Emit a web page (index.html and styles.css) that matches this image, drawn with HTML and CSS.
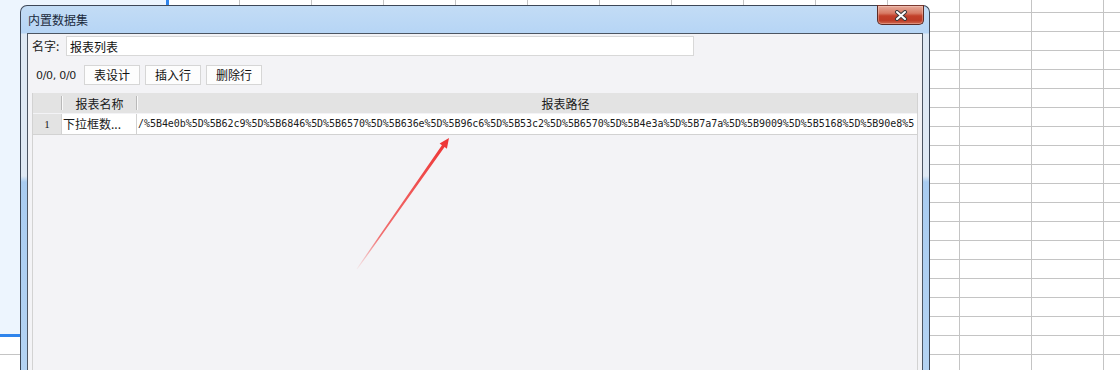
FILE: index.html
```html
<!DOCTYPE html>
<html lang="zh-CN">
<head>
    <meta charset="UTF-8">
    <title>内置数据集</title>
    <link rel="stylesheet" href="styles.css">
</head>
<body>
    <div class="sheet">
        <div class="selection"></div>

        <!-- Dataset dialog -->
        <div class="dialog">
            <div class="titlebar">
                <span class="title">内置数据集</span>
                <button class="close-btn">
                    <svg width="14" height="11" viewBox="0 0 14 11">
                        <path d="M3 2 L11 9 M11 2 L3 9" stroke="#3b3b3b" stroke-width="4" stroke-linecap="round"/>
                        <path d="M3 2 L11 9 M11 2 L3 9" stroke="#ffffff" stroke-width="2" stroke-linecap="round"/>
                    </svg>
                </button>
            </div>
            <div class="client">
                <div class="name-row">
                    <label class="name-label">名字:</label>
                    <input class="name-input" type="text" value="报表列表">
                </div>
                <div class="toolbar">
                    <span class="pos">0/0, 0/0</span>
                    <button class="btn">表设计</button>
                    <button class="btn">插入行</button>
                    <button class="btn">删除行</button>
                </div>
                <div class="grid">
                    <div class="grid-head">
                        <div class="col-num"></div>
                        <span class="sep"></span>
                        <div class="col-name">报表名称</div>
                        <span class="sep"></span>
                        <div class="col-path">报表路径</div>
                    </div>
                    <div class="grid-row">
                        <div class="col-num">1</div>
                        <div class="col-name">下拉框数...</div>
                        <div class="col-path mono">/%5B4e0b%5D%5B62c9%5D%5B6846%5D%5B6570%5D%5B636e%5D%5B96c6%5D%5B53c2%5D%5B6570%5D%5B4e3a%5D%5B7a7a%5D%5B9009%5D%5B5168%5D%5B90e8%5</div>
                    </div>
                </div>
            </div>
        </div>

        <svg class="arrow" width="1120" height="370" viewBox="0 0 1120 370">
            <defs>
                <linearGradient id="arrowFade" gradientUnits="userSpaceOnUse" x1="357" y1="269" x2="449" y2="138">
                    <stop offset="0" stop-color="#f04444" stop-opacity="0.05"/>
                    <stop offset="0.25" stop-color="#f04444" stop-opacity="0.75"/>
                    <stop offset="1" stop-color="#ee3434"/>
                </linearGradient>
            </defs>
            <polygon points="356.6,268.7 441.9,145.3 439.6,143.6 449,138 446.9,148.8 444.6,147.1 357.4,269.3" fill="url(#arrowFade)"/>
        </svg>
    </div>
</body>
</html>
```

FILE: styles.css
```css
:root {
    --grid-line: #c4c4c4;
    --select-blue: #2f84ec;
    --client-bg: #f3f3f6;
    --cell-gray: #e3e3e3;
    --cell-line: #d2d2d2;
    --frame-dark: #3d4757;
}

* {
    box-sizing: border-box;
    margin: 0;
    padding: 0;
}

body {
    width: 1120px;
    height: 370px;
    overflow: hidden;
    font-family: "Noto Sans CJK SC", "Liberation Sans", sans-serif;
    font-size: 12px;
    color: #1a1a1a;
}

/* spreadsheet behind the dialog */
.sheet {
    position: relative;
    width: 1120px;
    height: 370px;
    overflow: hidden;
    background-color: #ffffff;
    background-image:
        linear-gradient(to right, var(--grid-line) 1px, transparent 1px),
        linear-gradient(to bottom, var(--grid-line) 1px, transparent 1px);
    background-size: 72px 100%, 100% 19px;
    background-position: 23px 0, 0 12px;
}

.selection {
    position: absolute;
    left: 0;
    top: 0;
    width: 169px;
    height: 337px;
    background: #edf5fe;
    border-right: 3px solid var(--select-blue);
    border-bottom: 3px solid var(--select-blue);
}

/* dialog window */
.dialog {
    position: absolute;
    left: 20px;
    top: 5px;
    width: 910px;
    height: 365px;
    border: 1px solid var(--frame-dark);
    border-bottom: none;
    border-radius: 7px 7px 0 0;
    background: linear-gradient(to bottom,
        #c3dcf5 0, #b6d5f5 27px,
        #dfe9f4 28px, #dfe9f4 170px,
        #a9ccf1 176px, #b4d3f3 100%);
    display: flex;
    flex-direction: column;
}

.titlebar {
    height: 27px;
    display: flex;
    align-items: flex-start;
    padding-left: 7px;
    padding-right: 5px;
}

.title {
    line-height: 27px;
    font-size: 12px;
    color: #1b2a3c;
}

.close-btn {
    margin-left: auto;
    margin-top: -1px;
    width: 47px;
    height: 20px;
    border: 1px solid #5b2b25;
    border-top-color: #7a3a30;
    border-radius: 0 0 5px 5px;
    background: linear-gradient(to bottom, #e6ab9b 0, #d77a64 40%, #c2402a 55%, #bd3b26 80%, #cf6a50 100%);
    display: flex;
    align-items: center;
    justify-content: center;
    box-shadow: inset 0 0 0 1px rgba(255, 220, 210, 0.35);
}

.client {
    flex: 1;
    margin: 0 6px;
    border: 1px solid #4c5562;
    border-bottom: none;
    background: var(--client-bg);
    padding: 2px 4px 0 4px;
    display: flex;
    flex-direction: column;
}

.name-row {
    display: flex;
    align-items: center;
    height: 20px;
}

.name-label {
    width: 34px;
    line-height: 20px;
    color: #222;
}

.name-input {
    width: 628px;
    height: 20px;
    border: 1px solid #d8d8d8;
    background: #ffffff;
    padding-left: 3px;
    font-family: "Noto Sans CJK SC", sans-serif;
    font-size: 12px;
    color: #111;
    outline: none;
}

.toolbar {
    display: flex;
    align-items: center;
    gap: 5px;
    margin-top: 9px;
    height: 20px;
}

.pos {
    width: 47px;
    padding-left: 4px;
    font-family: "DejaVu Sans", sans-serif;
    font-size: 11px;
    letter-spacing: -0.3px;
    color: #222;
}

.btn {
    width: 56px;
    height: 20px;
    border: 1px solid #d6d6d6;
    background: #fdfdfd;
    font-family: "Noto Sans CJK SC", sans-serif;
    font-size: 12px;
    color: #111;
    line-height: 18px;
}

/* report table */
.grid {
    flex: 1;
    margin-top: 8px;
    border-left: 1px solid var(--cell-line);
    border-right: 1px solid var(--cell-line);
    display: flex;
    flex-direction: column;
}

.grid-head {
    display: flex;
    align-items: center;
    height: 20px;
    background: var(--cell-gray);
}

.grid-head .sep {
    width: 2px;
    height: 14px;
    border-left: 1px solid #b9b9b9;
    border-right: 1px solid #fafafa;
}

.grid-head .col-num {
    width: 28px;
}

.grid-head .col-name {
    width: 73px;
    text-align: center;
}

.grid-head .col-path {
    flex: 1;
    text-align: center;
    padding-left: 76px;
}

.grid-row {
    display: flex;
    height: 21px;
    margin-top: 1px;
    border-bottom: 1px solid var(--cell-line);
}

.grid-row > div {
    line-height: 20px;
    white-space: nowrap;
    overflow: hidden;
}

.grid-row .col-num {
    width: 29px;
    background: var(--cell-gray);
    border-right: 1px solid var(--cell-line);
    text-align: center;
    font-family: "Liberation Serif", serif;
    font-size: 11px;
}

.grid-row .col-name {
    width: 75px;
    background: #ffffff;
    border-right: 1px solid var(--cell-line);
    padding-left: 1px;
}

.grid-row .col-path {
    flex: 1;
    background: #ffffff;
    padding-left: 1px;
}

.mono {
    font-family: "DejaVu Sans Mono", "Liberation Mono", monospace;
    font-size: 10px;
    letter-spacing: -0.05px;
    color: #1a1a1a;
}

.arrow {
    position: absolute;
    left: 0;
    top: 0;
    pointer-events: none;
}
```
